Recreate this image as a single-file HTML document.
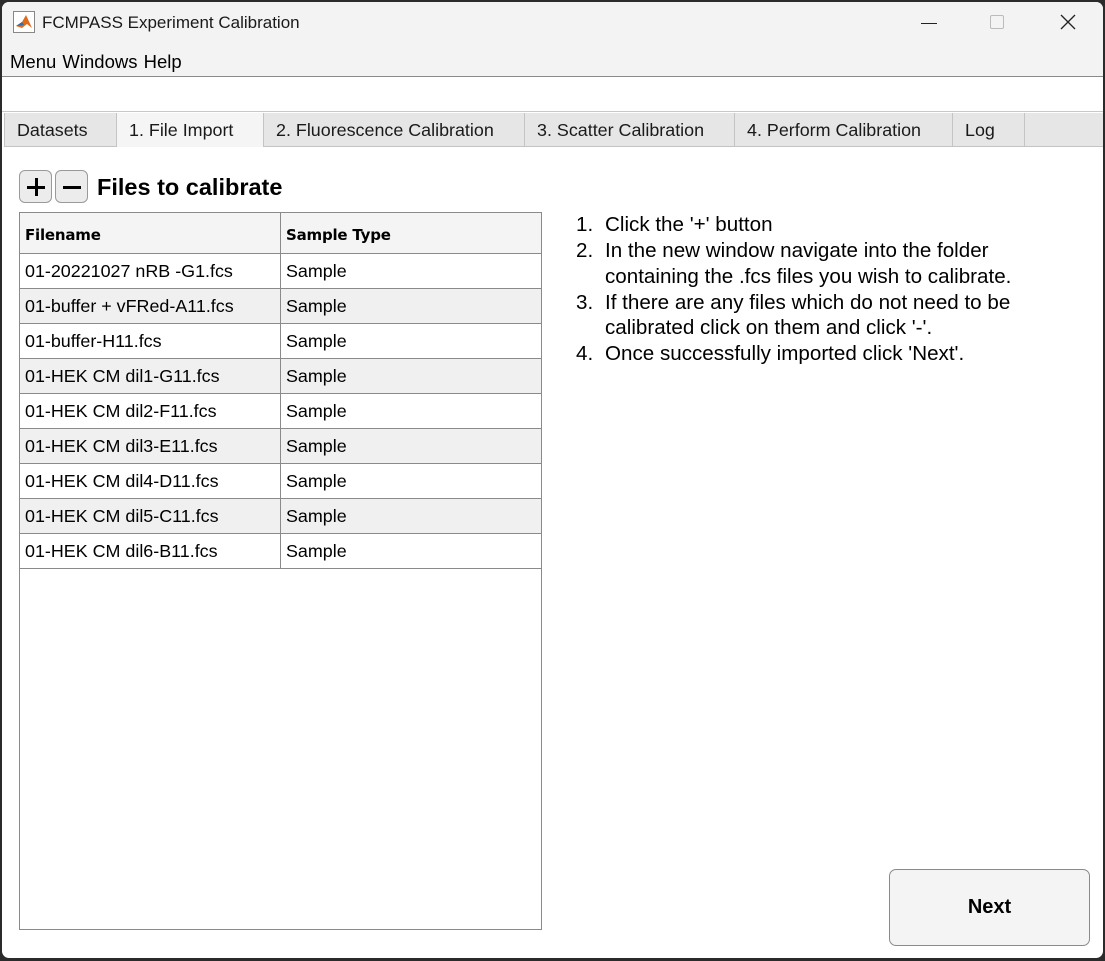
<!DOCTYPE html>
<html><head><meta charset="utf-8"><style>
*{box-sizing:border-box;margin:0;padding:0}
body{width:1105px;height:961px;background:#2b2b2b;font-family:"Liberation Sans",Arial,sans-serif;position:relative;overflow:hidden}
.win{position:absolute;left:2px;top:2px;width:1101px;height:956px;background:#fff;border-radius:7px;overflow:hidden}
.title{position:absolute;left:0;top:0;width:100%;height:75px;background:#f3f3f3;border-bottom:1px solid #8a8a8a}
.ttl{position:absolute;left:40px;top:11px;font-size:17px;color:#1a1a1a}
.menu{position:absolute;left:8px;top:49px;font-size:18.5px;color:#000;word-spacing:1px}
.tabs{position:absolute;left:0;top:109px;width:100%;height:36px;border-top:1px solid #c8c8c8;background:#fff}
.tab{position:absolute;top:1px;height:34px;background:#e6e6e6;border:1px solid #c4c4c4;border-top:none;font-size:17.9px;color:#1a1a1a;padding:7px 0 0 12px;white-space:nowrap}
.tab.act{background:#f5f5f5;border:none}
.btn{position:absolute;top:168px;width:33px;height:33px;border:1px solid #9a9a9a;border-radius:6px;background:#ececec}
.h{position:absolute;left:95px;top:172px;font-size:23.5px;font-weight:bold}
table{position:absolute;left:17px;top:210px;border-collapse:collapse;width:523px}
td{border:1px solid #8a8a8a;height:35px;font-size:17.9px;padding:0 0 0 5px;vertical-align:middle;white-space:nowrap}
tr.hd td{height:41px;background:#f4f4f4;font-weight:bold;font-family:"DejaVu Sans",sans-serif;font-size:15px;letter-spacing:-0.2px;padding-top:4px}
tr:nth-child(odd):not(.hd) td{background:#f0f0f0}
.rest{position:absolute;left:17px;top:565px;width:523px;height:363px;border:1px solid #8a8a8a;border-top:none}
.li{position:absolute;font-size:20.6px;white-space:nowrap;color:#000}
.next{position:absolute;left:887px;top:867px;width:201px;height:77px;border:1px solid #8a8a8a;border-radius:7px;background:#f4f4f4;font-size:20px;font-weight:bold;text-align:center;line-height:75px}
</style></head><body>
<div class="win">
<div class="title">
<svg style="position:absolute;left:11px;top:9px" width="22" height="22" viewBox="0 0 22 22"><rect x="0.5" y="0.5" width="21" height="21" fill="#fff" stroke="#888"/><path d="M3 15 L9 11 L13 4 L19 17 L14 13 L9 17 Z" fill="#e06a1b"/><path d="M3 15 L9 11 L11 14 Z" fill="#2a6fb0"/></svg>
<div class="ttl">FCMPASS Experiment Calibration</div>
<div style="position:absolute;left:919px;top:21px;width:16px;height:1px;background:#222"></div>
<div style="position:absolute;left:988px;top:13px;width:14px;height:14px;border:1px solid #bbb;border-radius:2px"></div>
<svg style="position:absolute;left:1058px;top:12px" width="16" height="16" viewBox="0 0 16 16"><path d="M1 1 L15 15 M15 1 L1 15" stroke="#222" stroke-width="1.3"/></svg>
<div class="menu">Menu Windows Help</div>
</div>
<div class="tabs">
<div class="tab" style="left:2px;width:113px">Datasets</div>
<div class="tab act" style="left:115px;width:147px">1. File Import</div>
<div class="tab" style="left:261px;width:262px">2. Fluorescence Calibration</div>
<div class="tab" style="left:522px;width:211px">3. Scatter Calibration</div>
<div class="tab" style="left:732px;width:219px">4. Perform Calibration</div>
<div class="tab" style="left:950px;width:73px">Log</div>
<div class="tab" style="left:1022px;width:80px;border-right:none"></div>
</div>
<div class="btn" style="left:17px"><div style="position:absolute;left:7px;top:15px;width:18px;height:3px;background:#000"></div><div style="position:absolute;left:14.5px;top:7px;width:3px;height:18px;background:#000"></div></div>
<div class="btn" style="left:53px"><div style="position:absolute;left:7px;top:15px;width:18px;height:3px;background:#000"></div></div>
<div class="h">Files to calibrate</div>
<table>
<tr class="hd"><td style="width:261px">Filename</td><td>Sample Type</td></tr>
<tr><td>01-20221027 nRB -G1.fcs</td><td>Sample</td></tr>
<tr><td>01-buffer + vFRed-A11.fcs</td><td>Sample</td></tr>
<tr><td>01-buffer-H11.fcs</td><td>Sample</td></tr>
<tr><td>01-HEK CM dil1-G11.fcs</td><td>Sample</td></tr>
<tr><td>01-HEK CM dil2-F11.fcs</td><td>Sample</td></tr>
<tr><td>01-HEK CM dil3-E11.fcs</td><td>Sample</td></tr>
<tr><td>01-HEK CM dil4-D11.fcs</td><td>Sample</td></tr>
<tr><td>01-HEK CM dil5-C11.fcs</td><td>Sample</td></tr>
<tr><td>01-HEK CM dil6-B11.fcs</td><td>Sample</td></tr>
</table>
<div class="rest"></div>
<div class="li" style="left:574px;top:211px">1.</div><div class="li" style="left:603px;top:211px">Click the '+' button</div>
<div class="li" style="left:574px;top:237px">2.</div><div class="li" style="left:603px;top:237px">In the new window navigate into the folder</div>
<div class="li" style="left:603px;top:263px">containing the .fcs files you wish to calibrate.</div>
<div class="li" style="left:574px;top:289px">3.</div><div class="li" style="left:603px;top:289px">If there are any files which do not need to be</div>
<div class="li" style="left:603px;top:314px">calibrated click on them and click '-'.</div>
<div class="li" style="left:574px;top:340px">4.</div><div class="li" style="left:603px;top:340px">Once successfully imported click 'Next'.</div>
<div class="next">Next</div>
</div>
</body></html>
